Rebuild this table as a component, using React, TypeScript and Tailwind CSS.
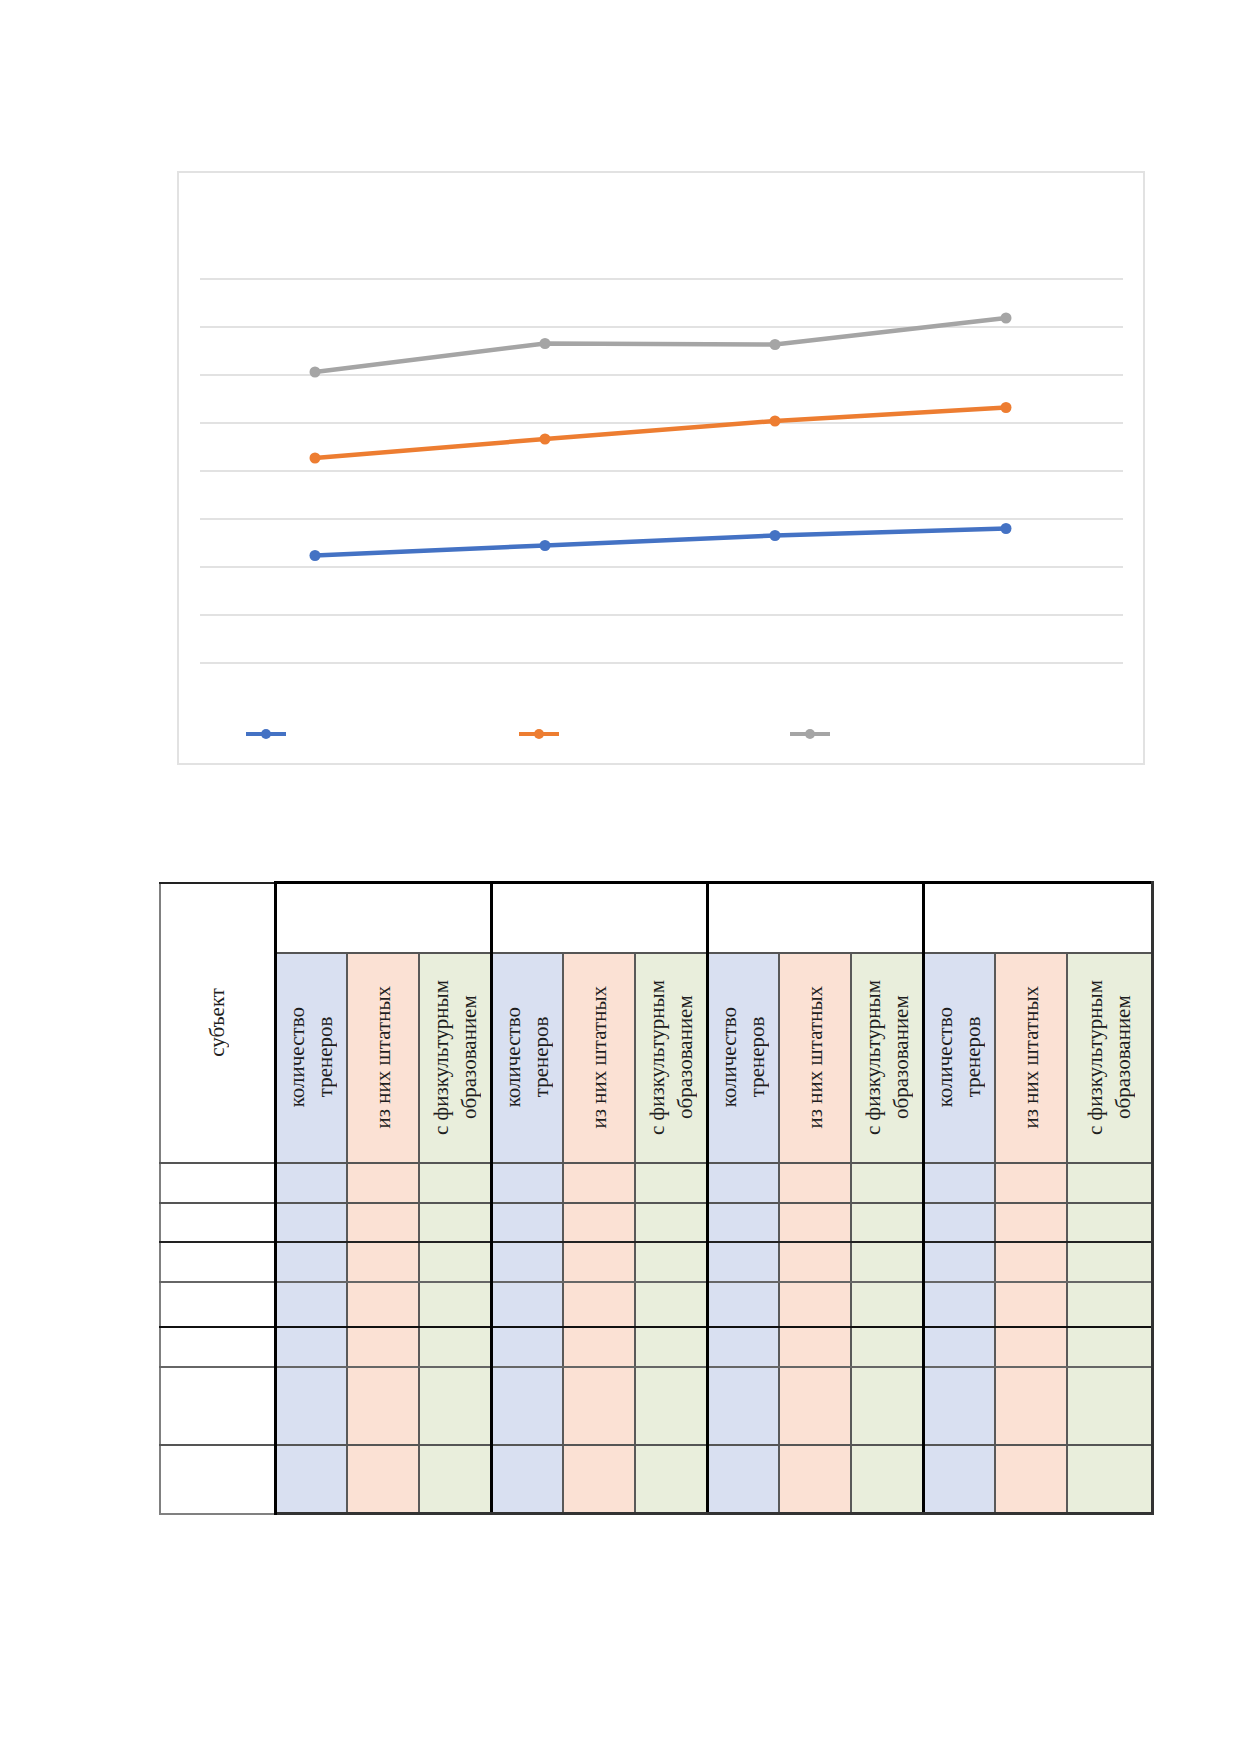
import React from "react";

type Pt = [number, number];

const series: { color: string; pts: Pt[] }[] = [
  { color: "#a5a5a5", pts: [[136, 199], [366, 170.5], [596, 171.5], [827, 145]] },
  { color: "#ed7d31", pts: [[136, 285], [366, 266], [596, 248], [827, 234.5]] },
  { color: "#4472c4", pts: [[136, 382.5], [366, 372.5], [596, 362.5], [827, 355.5]] },
];

const gridY = [106, 154, 202, 250, 298, 346, 394, 442, 490];

function LegendMark({ color }: { color: string }) {
  return (
    <svg width="40" height="12" viewBox="0 0 40 12">
      <line x1="0" y1="6" x2="40" y2="6" stroke={color} strokeWidth="4" />
      <circle cx="20" cy="6" r="5" fill={color} />
    </svg>
  );
}

function Chart() {
  return (
    <div className="w-[968px] h-[594px] border-2 border-[#e2e2e2] bg-white flex flex-col">
      <svg width="964" height="500" viewBox="0 0 964 500">
        {gridY.map((y) => (
          <line key={y} x1="21" y1={y} x2="944" y2={y} stroke="#d9d9d9" strokeWidth="1.5" />
        ))}
        {series.map((s) => (
          <g key={s.color}>
            <polyline
              points={s.pts.map((p) => p.join(",")).join(" ")}
              fill="none"
              stroke={s.color}
              strokeWidth="4.5"
              strokeLinejoin="round"
            />
            {s.pts.map((p, i) => (
              <circle key={i} cx={p[0]} cy={p[1]} r="5.5" fill={s.color} />
            ))}
          </g>
        ))}
      </svg>
      <div className="mt-[55px] flex pl-[67px]">
        <div className="w-[273px]"><LegendMark color="#4472c4" /></div>
        <div className="w-[271px]"><LegendMark color="#ed7d31" /></div>
        <div className="w-[273px]"><LegendMark color="#a5a5a5" /></div>
      </div>
    </div>
  );
}

const fills = ["bg-[#d9e0f1]", "bg-[#fbe1d4]", "bg-[#e9eedc]"];

const subHeads: React.ReactNode[] = [
  <>количество<br />тренеров</>,
  <>из них штатных</>,
  <>с физкультурным<br />образованием</>,
];

const rows = [
  { h: "h-[40px]", line: "border-b-[#555]" },
  { h: "h-[39px]", line: "border-b-[#222]" },
  { h: "h-[40px]", line: "border-b-[#666]" },
  { h: "h-[45px]", line: "border-b-[#111]" },
  { h: "h-[40px]", line: "border-b-[#666]" },
  { h: "h-[78px]", line: "border-b-[#555]" },
  { h: "h-[69px]", line: "border-b-[#333]" },
];

const cols = Array.from({ length: 12 }, (_, i) => i);

function colRight(i: number) {
  if (i === 11) return "border-r-[3px] border-r-[#333]";
  return i % 3 === 2 ? "border-r-[3px] border-r-black" : "border-r-2 border-r-[#595959]";
}

function TrainersTable() {
  return (
    <table className="table-fixed border-collapse w-[992px] [font-family:'Liberation_Serif','Times_New_Roman',serif] text-[21px] text-[#1e1e1e]">
      <colgroup>
        <col className="w-[115px]" />
        {cols.map((i) => (
          <col key={i} className={i === 11 ? "w-[85px]" : "w-[72px]"} />
        ))}
      </colgroup>
      <thead>
        <tr className="h-[70px]">
          <td
            rowSpan={2}
            className="p-0 bg-white border-l-2 border-l-[#808080] border-t-2 border-t-[#222] border-r-[3px] border-r-black border-b-2 border-b-[#555]"
          >
            <div className="h-[278px] flex items-center justify-center">
              <div className="[writing-mode:vertical-rl] rotate-180 leading-[28px]">субъект</div>
            </div>
          </td>
          {[0, 1, 2, 3].map((g) => (
            <td
              key={g}
              colSpan={3}
              className={`p-0 bg-white border-t-[3px] border-t-black border-b-2 border-b-[#555] ${
                g === 3 ? "border-r-[3px] border-r-[#333]" : "border-r-[3px] border-r-black"
              }`}
            />
          ))}
        </tr>
        <tr className="h-[210px]">
          {cols.map((i) => (
            <td key={i} className={`p-0 ${fills[i % 3]} ${colRight(i)} border-b-2 border-b-[#555]`}>
              <div className="h-[206px] flex items-center justify-center">
                <div className="[writing-mode:vertical-rl] rotate-180 text-center leading-[28px] whitespace-nowrap">
                  {subHeads[i % 3]}
                </div>
              </div>
            </td>
          ))}
        </tr>
      </thead>
      <tbody>
        {rows.map((r, ri) => {
          const last = ri === rows.length - 1;
          return (
            <tr key={ri} className={r.h}>
              <td
                className={`p-0 bg-white border-l-2 border-l-[#808080] border-r-[3px] border-r-black border-b-2 ${
                  last ? "border-b-[#808080]" : r.line
                }`}
              />
              {cols.map((i) => (
                <td
                  key={i}
                  className={`p-0 ${fills[i % 3]} ${colRight(i)} ${
                    last ? "border-b-[3px] border-b-[#333]" : `border-b-2 ${r.line}`
                  }`}
                />
              ))}
            </tr>
          );
        })}
      </tbody>
    </table>
  );
}

export default function App() {
  return (
    <div className="w-[1241px] min-h-[1754px] bg-white">
      <div className="pt-[171px] pl-[177px]">
        <Chart />
      </div>
      <div className="pt-[116px] pl-[159px]">
        <TrainersTable />
      </div>
    </div>
  );
}
